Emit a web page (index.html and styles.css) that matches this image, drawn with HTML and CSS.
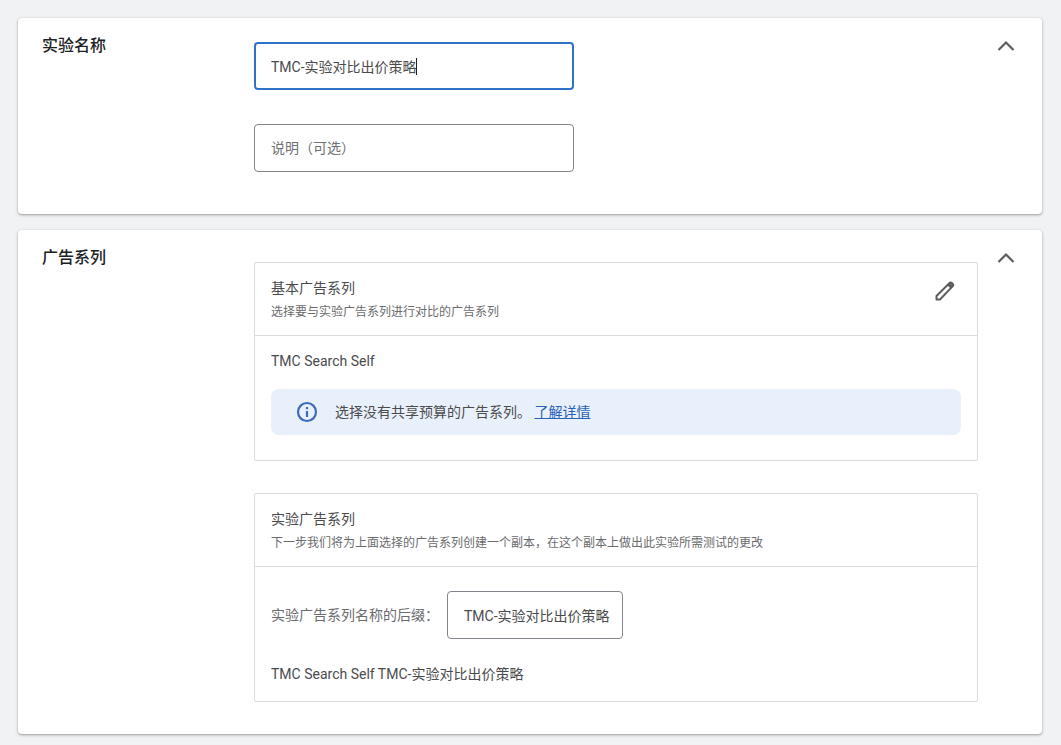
FILE: index.html
```html
<!DOCTYPE html>
<html lang="zh-CN">
<head>
<meta charset="utf-8">
<title>实验</title>
<link rel="stylesheet" href="styles.css">
</head>
<body>
<main class="page">
  <section class="card card-name">
    <h2 class="card-title">实验名称</h2>
    <div class="card-content fields">
      <div class="field">
        <input class="input input-active" type="text" aria-label="实验名称" value="TMC-实验对比出价策略">
        <span class="caret"></span>
      </div>
      <input class="input" type="text" aria-label="说明（可选）" placeholder="说明（可选）">
    </div>
    <button class="icon-button" type="button" aria-label="收起实验名称">
      <svg class="icon" viewBox="0 0 24 24"><path d="M4.500 16 12 8.500l7.500 7.500" fill="none" stroke="#5c5d5f" stroke-width="2.200"/></svg>
    </button>
  </section>

  <section class="card card-campaign">
    <h2 class="card-title">广告系列</h2>
    <div class="card-content panels">
      <article class="panel">
        <header class="panel-head">
          <div>
            <h3 class="panel-title">基本广告系列</h3>
            <p class="panel-sub">选择要与实验广告系列进行对比的广告系列</p>
          </div>
          <button class="icon-button" type="button" aria-label="修改基本广告系列">
            <svg class="icon" viewBox="0 0 24 24"><path d="M3.500 20.500v-3.500L16.300 4.200a2 2 0 0 1 2.800 0l.4.4a2 2 0 0 1 0 2.800L7 20.500z" fill="none" stroke="#5c5d5f" stroke-width="2" stroke-linejoin="round"/><path d="M14.300 6.200 17 3.500l3.500 3.500-2.700 2.700z" fill="#5c5d5f"/></svg>
          </button>
        </header>
        <div class="panel-body">
          <p class="text">TMC Search Self</p>
          <div class="notice">
            <svg class="icon" viewBox="0 0 24 24"><circle cx="12" cy="12" r="9" fill="none" stroke="#3f6bbb" stroke-width="2.200"/><path d="M12 11v6M12 7v2.200" stroke="#3f6bbb" stroke-width="2.200"/></svg>
            <p class="text">选择没有共享预算的广告系列。 <a class="link" href="#">了解详情</a></p>
          </div>
        </div>
      </article>

      <article class="panel">
        <header class="panel-head">
          <div>
            <h3 class="panel-title">实验广告系列</h3>
            <p class="panel-sub">下一步我们将为上面选择的广告系列创建一个副本，在这个副本上做出此实验所需测试的更改</p>
          </div>
        </header>
        <div class="panel-body panel-body-form">
          <div class="suffix">
            <label class="suffix-label" for="suffix">实验广告系列名称的后缀：</label>
            <input class="input input-small" id="suffix" type="text" value="TMC-实验对比出价策略">
          </div>
          <p class="text">TMC Search Self TMC-实验对比出价策略</p>
        </div>
      </article>
    </div>
    <button class="icon-button" type="button" aria-label="收起广告系列">
      <svg class="icon" viewBox="0 0 24 24"><path d="M4.500 16 12 8.500l7.500 7.500" fill="none" stroke="#5c5d5f" stroke-width="2.200"/></svg>
    </button>
  </section>
</main>
</body>
</html>
```
FILE: styles.css
```css
* {
  box-sizing: border-box;
}

body {
  margin: 0;
  background: #f1f2f3;
  color: #4a4b4d;
  font: 14px/20px Roboto, "Noto Sans CJK SC", sans-serif;
}

h2,
h3,
p {
  margin: 0;
  font-weight: 400;
}

.page {
  display: flex;
  flex-direction: column;
  gap: 16px;
  padding: 18px 19px 11px 18px;
}

.card {
  display: grid;
  grid-template-columns: 212px minmax(0, 1fr) 24px;
  align-items: start;
  padding: 16px 24px 32px;
  background: #fff;
  border-radius: 4px;
  box-shadow: 0 1px 2px rgba(60, 64, 67, 0.35), 0 1px 3px 1px rgba(60, 64, 67, 0.12);
}

.card-name {
  padding-bottom: 42px;
}

.card-title {
  color: #202124;
  font-size: 16px;
  font-weight: 500;
  line-height: 24px;
}

.card-content {
  display: flex;
  flex-direction: column;
  margin-right: 16px;
}

.fields {
  gap: 34px;
  max-width: 320px;
  padding-top: 8px;
}

.panels {
  gap: 32px;
  padding-top: 16px;
}

.field {
  position: relative;
  display: flex;
}

.input {
  width: 100%;
  height: 48px;
  padding: 0 12px 0 16px;
  border: 1px solid #80868b;
  border-radius: 4px;
  outline: none;
  background: #fff;
  color: inherit;
  font: inherit;
}

.input::placeholder {
  color: #6f7072;
  opacity: 1;
}

.input-active {
  padding: 0 15px;
  border: 2px solid #2f72ca;
}

.input-small {
  width: 176px;
}

.caret {
  position: absolute;
  top: 16px;
  left: 162px;
  width: 1px;
  height: 17px;
  background: #202124;
}

.icon-button {
  display: flex;
  padding: 0;
  border: 0;
  background: none;
  cursor: pointer;
}

.icon {
  display: block;
  flex: none;
  width: 24px;
  height: 24px;
}

.panel {
  border: 1px solid #dadce0;
  border-radius: 2px;
}

.panel-head {
  display: flex;
  align-items: flex-start;
  justify-content: space-between;
  padding: 16px 20px 8px 16px;
  border-bottom: 1px solid #dadce0;
}

.panel-title {
  font-size: 14px;
  line-height: 18px;
}

.panel-sub {
  color: #6a6b6d;
  font-size: 12px;
  line-height: 30px;
}

.panel-body {
  display: flex;
  flex-direction: column;
  gap: 18px;
  padding: 15px 16px 25px;
}

.panel-body-form {
  gap: 25px;
  padding: 24px 16px 17px;
}

.notice {
  display: flex;
  align-items: center;
  gap: 16px;
  padding: 11px 24px;
  border-radius: 8px;
  background: #e8f0fb;
}

.link {
  color: #2862b8;
}

.suffix {
  display: flex;
  align-items: center;
  gap: 8px;
}

.suffix-label {
  color: #6a6b6d;
}
```
